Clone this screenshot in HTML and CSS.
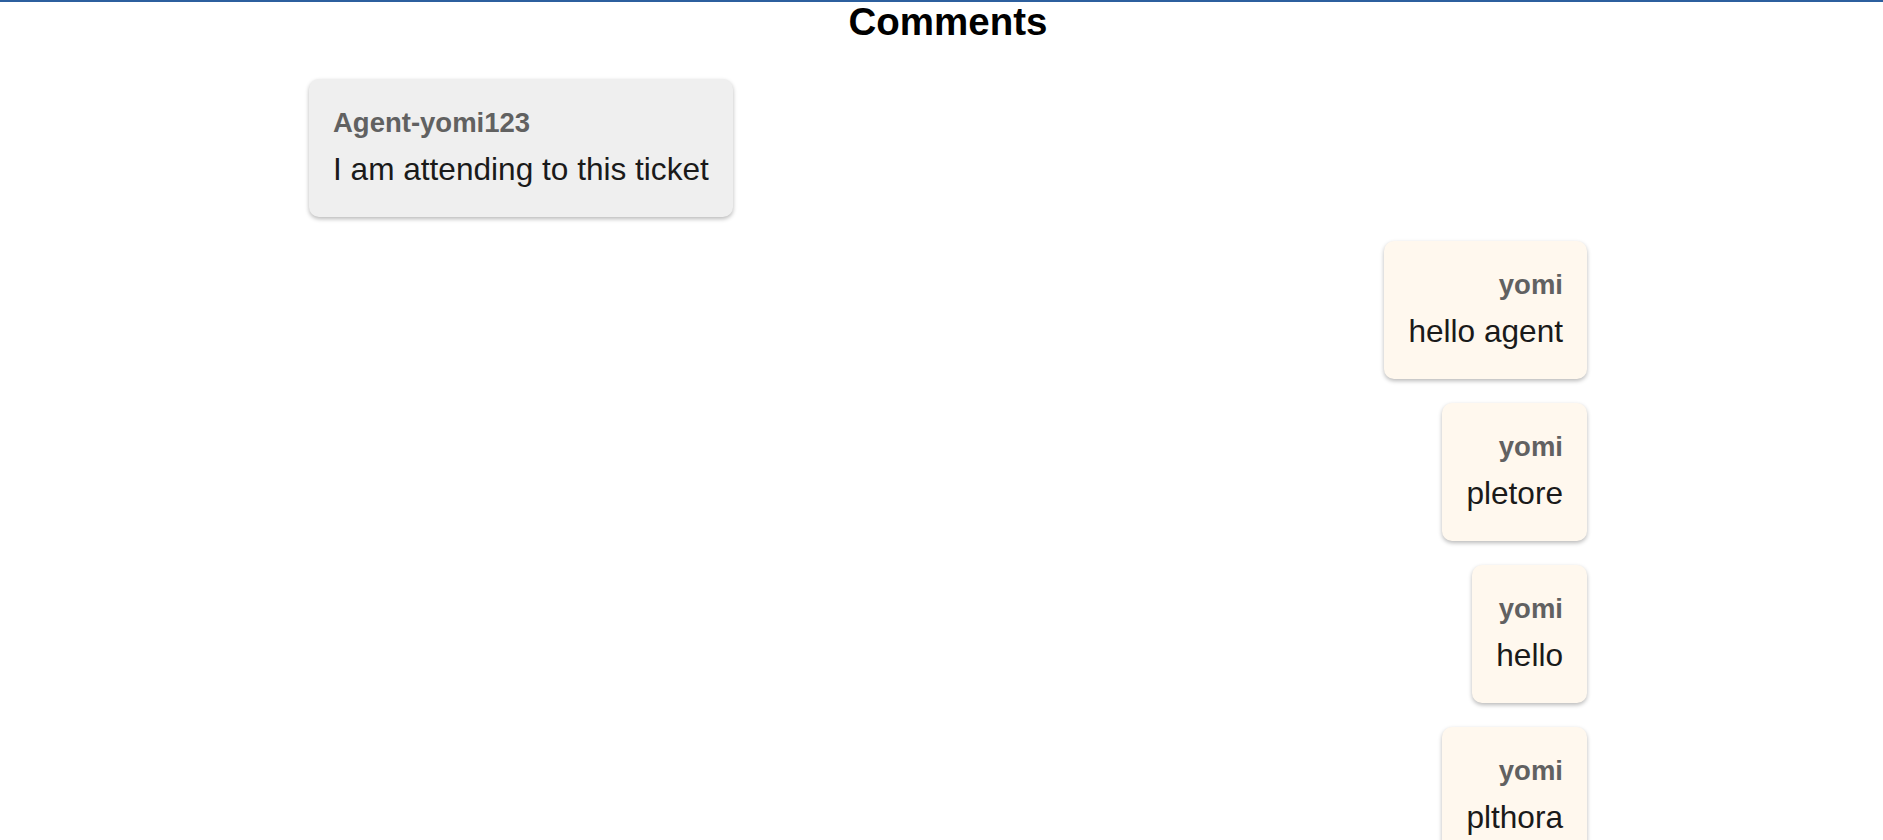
FILE: index.html
```html
<!DOCTYPE html>
<html lang="en">
<head>
<meta charset="utf-8">
<title>Comments</title>
<link rel="stylesheet" href="styles.css">
</head>
<body>
<div class="topbar"></div>
<main class="page">
  <h1 class="title">Comments</h1>
  <div class="thread">
    <div class="comment agent">
      <div class="author">Agent-yomi123</div>
      <div class="text">I am attending to this ticket</div>
    </div>
    <div class="comment user">
      <div class="author">yomi</div>
      <div class="text">hello agent</div>
    </div>
    <div class="comment user">
      <div class="author">yomi</div>
      <div class="text">pletore</div>
    </div>
    <div class="comment user">
      <div class="author">yomi</div>
      <div class="text">hello</div>
    </div>
    <div class="comment user">
      <div class="author">yomi</div>
      <div class="text">plthora</div>
    </div>
  </div>
</main>
</body>
</html>
```
FILE: styles.css
```css
html, body {
  margin: 0;
  padding: 0;
  background: #ffffff;
  font-family: "Liberation Sans", Arial, sans-serif;
}

.topbar {
  height: 2px;
  background: #2c5f9e;
}

.page {
  padding: 0 296px 0 309px;
}

.title {
  margin: 0;
  text-align: center;
  font-size: 38.5px;
  font-weight: 700;
  line-height: 40px;
  color: #000;
}

.thread {
  display: flex;
  flex-direction: column;
  gap: 24px;
  margin-top: 37px;
}

.comment {
  padding: 24px 24px 26px;
  border-radius: 10px;
  box-shadow: 0 2px 4px rgba(0, 0, 0, 0.28);
}

.comment.agent {
  align-self: flex-start;
  background: #efefef;
  text-align: left;
}

.comment.user {
  align-self: flex-end;
  background: #fff8ee;
  text-align: right;
}

.author {
  font-size: 27.5px;
  font-weight: 700;
  line-height: 40px;
  color: #616161;
}

.text {
  margin-top: 5px;
  font-size: 31.6px;
  line-height: 43px;
  color: #1a1a1a;
}
```
